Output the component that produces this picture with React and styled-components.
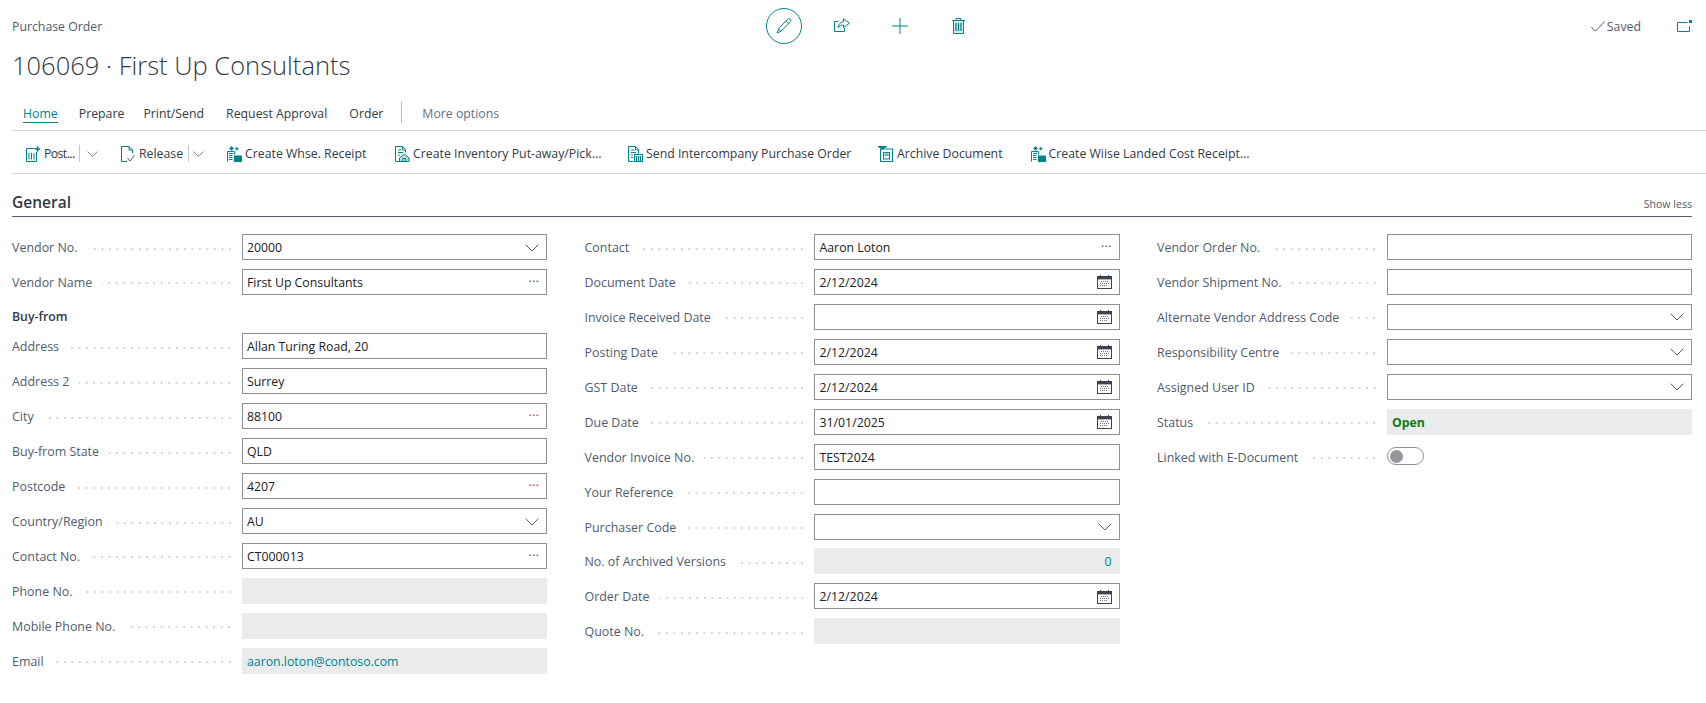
import React from "react";
import styled, { createGlobalStyle } from "styled-components";

const TEAL = "#00838a";
const FONT = `"Open Sans", "Noto Sans", sans-serif`;

const Global = createGlobalStyle`
  html, body { margin: 0; padding: 0; background: #fff; }
  body { font-family: ${FONT}; font-size: 12.3px; color: #212121; overflow: hidden; }
  * { box-sizing: border-box; }
`;

const Page = styled.div`
  width: 1706px;
  height: 703px;
  background: #fff;
`;

const Header = styled.header`
  display: flex;
  align-items: flex-start;
  height: 102px;
  padding: 8px 0 0 12px;
`;
const TitleBlock = styled.div`
  width: 754px;
  flex: none;
`;
const Caption = styled.div`
  font-size: 12.3px;
  line-height: 16px;
  color: #505c6d;
  margin-top: 11px;
`;
const Title = styled.h1`
  margin: 13px 0 0;
  font-size: 25.5px;
  line-height: 34px;
  font-weight: 300;
  color: #333a44;
  white-space: nowrap;
`;
const ActionIcons = styled.div`
  display: flex;
  align-items: center;
  height: 36px;
`;
const EditCircle = styled.button`
  width: 36px;
  height: 36px;
  border: 1px solid ${TEAL};
  border-radius: 50%;
  background: #fff;
  padding: 0;
  display: flex;
  align-items: center;
  justify-content: center;
  margin-right: 32px;
`;
const HeaderIcon = styled.span`
  display: flex;
  justify-content: center;
  width: 16px;
  height: 16px;
  margin-right: ${(p) => p.$gap}px;
`;
const SavedArea = styled.div`
  margin-left: auto;
  display: flex;
  align-items: center;
  height: 36px;
  color: #505c6d;
  font-size: 12.3px;
`;
const SavedText = styled.span`
  margin: 0 36px 0 2px;
`;
const OpenBox = styled.span`
  display: flex;
  margin-right: 14px;
`;

const Tabs = styled.nav`
  display: flex;
  align-items: flex-start;
  height: 29px;
  margin-left: 12px;
  padding-left: 11px;
  border-bottom: 1px solid #d4d4d8;
`;
const Tab = styled.div`
  font-size: 12.3px;
  line-height: 24px;
  height: 24px;
  margin-right: ${(p) => p.$gap}px;
  color: ${(p) => (p.$active ? TEAL : p.$muted ? "#667180" : "#333a44")};
  position: relative;
  ${(p) =>
    p.$active &&
    `&::after{content:"";position:absolute;left:0;right:0;bottom:3px;height:1px;background:${TEAL};}`}
`;
const TabDivider = styled.div`
  width: 1px;
  height: 21px;
  margin: 0 20px 0 0;
  background: #b5b9c0;
`;

const Toolbar = styled.div`
  display: flex;
  align-items: center;
  height: 43px;
  margin-left: 12px;
  padding: 3px 0 0 14px;
  border-bottom: 1px solid #d4d4d8;
`;
const ToolItem = styled.div`
  display: flex;
  align-items: center;
  flex: none;
  width: ${(p) => p.$width}px;
  color: #333a44;
  font-size: 12.3px;
  white-space: nowrap;
`;
const ToolIcon = styled.span`
  display: flex;
  width: 15px;
  height: 16px;
`;
const ToolLabel = styled.span`
  margin-left: ${(p) => p.$gap}px;
  letter-spacing: ${(p) => p.$track || 0}px;
`;
const SplitBar = styled.span`
  width: 1px;
  height: 17px;
  background: #c5c8cc;
  margin: 0 ${(p) => p.$right}px 0 ${(p) => p.$left}px;
`;

const Section = styled.section`
  width: 1680px;
  margin-left: 12px;
`;
const SectionHead = styled.div`
  display: flex;
  align-items: flex-end;
  justify-content: space-between;
  height: 43px;
  padding-bottom: 3px;
  border-bottom: 1px solid #505c6d;
`;
const SectionTitle = styled.h2`
  margin: 0;
  font-size: 15.5px;
  line-height: 22px;
  font-weight: 600;
  color: #333a44;
`;
const ShowLess = styled.span`
  font-size: 10.6px;
  line-height: 16px;
  margin-bottom: 1px;
  color: #505c6d;
`;
const Columns = styled.div`
  display: grid;
  grid-template-columns: 572.5px 572.5px 535px;
  padding-top: 17px;
`;
const Column = styled.div`
  display: flex;
  flex-direction: column;
  gap: 8.95px;
  width: 535px;
`;
const Row = styled.div`
  display: flex;
  align-items: center;
  height: 26px;
`;
const Label = styled.div`
  width: 229.5px;
  flex: none;
  display: flex;
  align-items: center;
  height: 100%;
  padding: 1px 11px 0 0;
  font-size: 12.45px;
  color: #505c6d;
  white-space: nowrap;
`;
const Leader = styled.span`
  flex: 1;
  height: 2px;
  margin-left: 10px;
  margin-top: 2px;
  background-image: linear-gradient(to right, #d4d5d8 2px, transparent 2px);
  background-size: 7.5px 2px;
  background-repeat: repeat-x;
  background-position: calc(100% + 5.5px) 0;
`;
const GroupCaption = styled.div`
  height: 20.5px;
  padding-top: 4px;
  display: flex;
  align-items: center;
  font-size: 12.3px;
  font-weight: 600;
  color: #333a44;
`;
const Box = styled.div`
  flex: 1;
  min-width: 0;
  height: 100%;
  display: flex;
  align-items: center;
  justify-content: space-between;
  padding: 1px 7px 0 4.5px;
  font-size: 12.3px;
  color: #212121;
  background: ${(p) => (p.$readonly ? "#eaebec" : "#fff")};
  border: 1px solid ${(p) => (p.$readonly ? "#eaebec" : "#8a919c")};
`;
const ValueText = styled.span`
  color: ${(p) => p.$color || "inherit"};
  font-weight: ${(p) => (p.$bold ? 700 : 400)};
  ${(p) => p.$end && "margin-left:auto;"}
`;
const Ellipsis = styled.span`
  font-size: 13.5px;
  line-height: 12px;
  margin: 0 0 3px;
  color: ${(p) => p.$color};
`;
const Toggle = styled.div`
  width: 37px;
  height: 18px;
  margin-top: -1px;
  border: 1px solid #8a919c;
  border-radius: 9px;
  padding: 0 2px;
  display: flex;
  align-items: center;
`;
const Knob = styled.span`
  width: 13px;
  height: 13px;
  border-radius: 50%;
  background: #93979c;
`;

const Chevron = () => (
  <svg width="14" height="8" viewBox="0 0 14 8" fill="none" stroke="#505c6d" strokeWidth="1">
    <path d="M.7.7 7 7 13.3.7" />
  </svg>
);
const SmallChevron = () => (
  <svg width="11" height="6" viewBox="0 0 11 6" fill="none" stroke="#7b8492" strokeWidth="1">
    <path d="M.6.5 5.5 5.4 10.4.5" />
  </svg>
);
const Calendar = () => (
  <svg width="15" height="14" viewBox="0 0 15 14" fill="none">
    <rect x=".5" y="1.5" width="14" height="12" stroke="#3d4450" />
    <rect x="1" y="2" width="13" height="2.4" fill="#3d4450" />
    <path d="M3.5 0v2M11.5 0v2" stroke="#3d4450" />
    <path d="M4 6.5h8M3 8.5h9M3 10.5h7" stroke="#6a7382" strokeDasharray="1 1" />
  </svg>
);

const tealStroke = { fill: "none", stroke: TEAL, strokeWidth: 1 };

const PostIcon = () => (
  <svg width="15" height="16" viewBox="0 0 15 16" {...tealStroke}>
    <path d="M.5 2.5h8M.5 2.5v13h10V6" />
    <path d="M3 7v6.5M5.5 7v6.5M8 7v6.5" />
    <path d="M11.5 .3v5.4M8.8 3h5.4" strokeWidth="1.6" />
  </svg>
);
const ReleaseIcon = () => (
  <svg width="15" height="16" viewBox="0 0 15 16" {...tealStroke}>
    <path d="M6 15.5H.5V.5h7.5l3.5 3.5v3" />
    <path d="M8 .5V4h3.5" />
    <path d="M6.5 12l2.5 3 4.5-6" stroke="#4f5b6a" />
  </svg>
);
const WhseIcon = () => (
  <svg width="15" height="16" viewBox="0 0 15 16" {...tealStroke}>
    <path d="M.5 15.5V5.5h7v3" />
    <path d="M2 7.5h4M2 9.5h3.5M2 11.5h3.5M2 13.5h3.5" />
    <path d="M4.5.3v4.4M2.3 2.5h4.4M3 1l3 3M6 1 3 4" strokeWidth=".9" />
    <path d="M9.8.8v3.8M8 2.7h3.6M8.6 1.5l2.4 2.4M11 1.5 8.6 3.9" strokeWidth=".8" />
    <rect x="7" y="9.5" width="8" height="6.5" fill={TEAL} stroke="none" />
  </svg>
);
const InventoryIcon = () => (
  <svg width="15" height="16" viewBox="0 0 15 16" {...tealStroke}>
    <path d="M5 15.5H.5V.5h7l3 3v3" />
    <path d="M7.5.5V4h3M3 4h3M3 6.5h5M3 9h2" />
    <path d="M4.5 12l4.8-4 4.8 4v3.5H4.5z" fill="#bfe0e2" />
    <path d="M7.8 15.5v-3h3v3" />
  </svg>
);
const SendIcon = () => (
  <svg width="15" height="16" viewBox="0 0 15 16" {...tealStroke}>
    <path d="M5.5 15.5h-5V.5h7l3 3v4" />
    <path d="M7.5.5V4h3M3 4h3M3 6.5h5M3 9h2M3 11.5h2" />
    <rect x="6.5" y="8.5" width="8" height="7" />
    <path d="M8.5 10v5.5M10.5 10v5.5M12.5 10v5.5" strokeWidth="1.2" />
  </svg>
);
const ArchiveIcon = () => (
  <svg width="15" height="16" viewBox="0 0 15 16" {...tealStroke}>
    <rect x="2.5" y="3" width="12" height="12.5" />
    <path d="M0 .5 4.5 3.2 8.5.5z" fill={TEAL} />
    <rect x="5.5" y="6.5" width="6" height="6.5" />
    <path d="M5.5 9h6M7.5 8h2" />
  </svg>
);
const PencilIcon = () => (
  <svg width="16" height="16" viewBox="0 0 16 16" {...tealStroke}>
    <path d="M11.3 1.3c.8-.8 2-.8 2.8-.1.9.8.9 2 .1 2.8L5 13.3 1 15l1.6-4.2z" />
    <path d="M10 2.8l3 3M2.6 10.8l2.4 2.5" />
  </svg>
);
const ShareIcon = () => (
  <svg width="16" height="14" viewBox="0 0 16 14" {...tealStroke}>
    <path d="M4.5 3.5H.5v10h10V10" />
    <path d="M9.5.8l6 4.4-6 4.4V7c-2.7 0-4.4.9-5.5 2.8.2-3.4 2-5.5 5.5-6z" />
  </svg>
);
const PlusIcon = () => (
  <svg width="16" height="16" viewBox="0 0 16 16" {...tealStroke}>
    <path d="M8 0v16M0 8h16" />
  </svg>
);
const TrashIcon = () => (
  <svg width="13" height="16" viewBox="0 0 13 16" {...tealStroke}>
    <path d="M0 2.5h13M4 2.5v-2h5v2" />
    <path d="M1.5 2.5v13h10v-13z" fill="#d5eaeb" />
    <path d="M4 5v8M6.5 5v8M9 5v8" strokeWidth="1.3" />
  </svg>
);
const CheckIcon = () => (
  <svg width="14" height="11" viewBox="0 0 14 11" fill="none" stroke="#505c6d">
    <path d="M.4 6 4.5 10.2 13.6.5" />
  </svg>
);
const OpenIcon = () => (
  <svg width="15" height="12" viewBox="0 0 15 12" fill="none" stroke={TEAL}>
    <path d="M10.5 2.5H.5v9h12V6" />
    <rect x="12" y="0" width="3" height="3" fill={TEAL} stroke="none" />
  </svg>
);

const trail = (t) => {
  if (t === "c") return <Chevron />;
  if (t === "d") return <Ellipsis $color="#505c6d">···</Ellipsis>;
  if (t === "r") return <Ellipsis $color="#c43b2f">···</Ellipsis>;
  if (t === "k") return <Calendar />;
  return null;
};

const col1 = [
  { l: "Vendor No.", v: "20000", t: "c" },
  { l: "Vendor Name", v: "First Up Consultants", t: "d" },
  { group: "Buy-from" },
  { l: "Address", v: "Allan Turing Road, 20" },
  { l: "Address 2", v: "Surrey" },
  { l: "City", v: "88100", t: "r" },
  { l: "Buy-from State", v: "QLD" },
  { l: "Postcode", v: "4207", t: "r" },
  { l: "Country/Region", v: "AU", t: "c" },
  { l: "Contact No.", v: "CT000013", t: "d" },
  { l: "Phone No.", ro: true },
  { l: "Mobile Phone No.", ro: true },
  { l: "Email", v: "aaron.loton@contoso.com", ro: true, color: TEAL },
];
const col2 = [
  { l: "Contact", v: "Aaron Loton", t: "d" },
  { l: "Document Date", v: "2/12/2024", t: "k" },
  { l: "Invoice Received Date", t: "k" },
  { l: "Posting Date", v: "2/12/2024", t: "k" },
  { l: "GST Date", v: "2/12/2024", t: "k" },
  { l: "Due Date", v: "31/01/2025", t: "k" },
  { l: "Vendor Invoice No.", v: "TEST2024" },
  { l: "Your Reference" },
  { l: "Purchaser Code", t: "c" },
  { l: "No. of Archived Versions", v: "0", ro: true, color: TEAL, end: true },
  { l: "Order Date", v: "2/12/2024", t: "k" },
  { l: "Quote No.", ro: true },
];
const col3 = [
  { l: "Vendor Order No." },
  { l: "Vendor Shipment No." },
  { l: "Alternate Vendor Address Code", t: "c" },
  { l: "Responsibility Centre", t: "c" },
  { l: "Assigned User ID", t: "c" },
  { l: "Status", v: "Open", ro: true, color: "#107c10", bold: true },
  { l: "Linked with E-Document", toggle: true },
];

const FieldColumn = ({ rows }) => (
  <Column>
    {rows.map((r, i) =>
      r.group ? (
        <GroupCaption key={i}>{r.group}</GroupCaption>
      ) : (
        <Row key={i}>
          <Label>
            {r.l}
            <Leader />
          </Label>
          {r.toggle ? (
            <Toggle>
              <Knob />
            </Toggle>
          ) : (
            <Box $readonly={r.ro}>
              <ValueText $color={r.color} $bold={r.bold} $end={r.end}>
                {r.v}
              </ValueText>
              {trail(r.t)}
            </Box>
          )}
        </Row>
      )
    )}
  </Column>
);

const tools = [
  { icon: <PostIcon />, label: "Post...", split: [4, 7], width: 95, gap: 3, track: -0.6 },
  { icon: <ReleaseIcon />, label: "Release", split: [5, 4], width: 106, gap: 3 },
  { icon: <WhseIcon />, label: "Create Whse. Receipt", width: 168, gap: 3 },
  { icon: <InventoryIcon />, label: "Create Inventory Put-away/Pick...", width: 233, gap: 3 },
  { icon: <SendIcon />, label: "Send Intercompany Purchase Order", width: 250, gap: 3 },
  { icon: <ArchiveIcon />, label: "Archive Document", width: 152.5, gap: 4 },
  { icon: <WhseIcon />, label: "Create Wiise Landed Cost Receipt...", width: 260, gap: 3 },
];

export default function App() {
  return (
    <Page>
      <Global />
      <Header>
        <TitleBlock>
          <Caption>Purchase Order</Caption>
          <Title>106069 · First Up Consultants</Title>
        </TitleBlock>
        <ActionIcons>
          <EditCircle>
            <PencilIcon />
          </EditCircle>
          <HeaderIcon $gap={42}>
            <ShareIcon />
          </HeaderIcon>
          <HeaderIcon $gap={42}>
            <PlusIcon />
          </HeaderIcon>
          <HeaderIcon $gap={0}>
            <TrashIcon />
          </HeaderIcon>
        </ActionIcons>
        <SavedArea>
          <CheckIcon />
          <SavedText>Saved</SavedText>
          <OpenBox>
            <OpenIcon />
          </OpenBox>
        </SavedArea>
      </Header>
      <Tabs>
        <Tab $active $gap={21}>Home</Tab>
        <Tab $gap={19}>Prepare</Tab>
        <Tab $gap={22}>Print/Send</Tab>
        <Tab $gap={22}>Request Approval</Tab>
        <Tab $gap={18}>Order</Tab>
        <TabDivider />
        <Tab $muted $gap={0}>More options</Tab>
      </Tabs>
      <Toolbar>
        {tools.map((t) => (
          <ToolItem key={t.label} $width={t.width}>
            <ToolIcon>{t.icon}</ToolIcon>
            <ToolLabel $gap={t.gap} $track={t.track}>{t.label}</ToolLabel>
            {t.split && (
              <>
                <SplitBar $left={t.split[0]} $right={t.split[1]} />
                <SmallChevron />
              </>
            )}
          </ToolItem>
        ))}
      </Toolbar>
      <Section>
        <SectionHead>
          <SectionTitle>General</SectionTitle>
          <ShowLess>Show less</ShowLess>
        </SectionHead>
        <Columns>
          <FieldColumn rows={col1} />
          <FieldColumn rows={col2} />
          <FieldColumn rows={col3} />
        </Columns>
      </Section>
    </Page>
  );
}
